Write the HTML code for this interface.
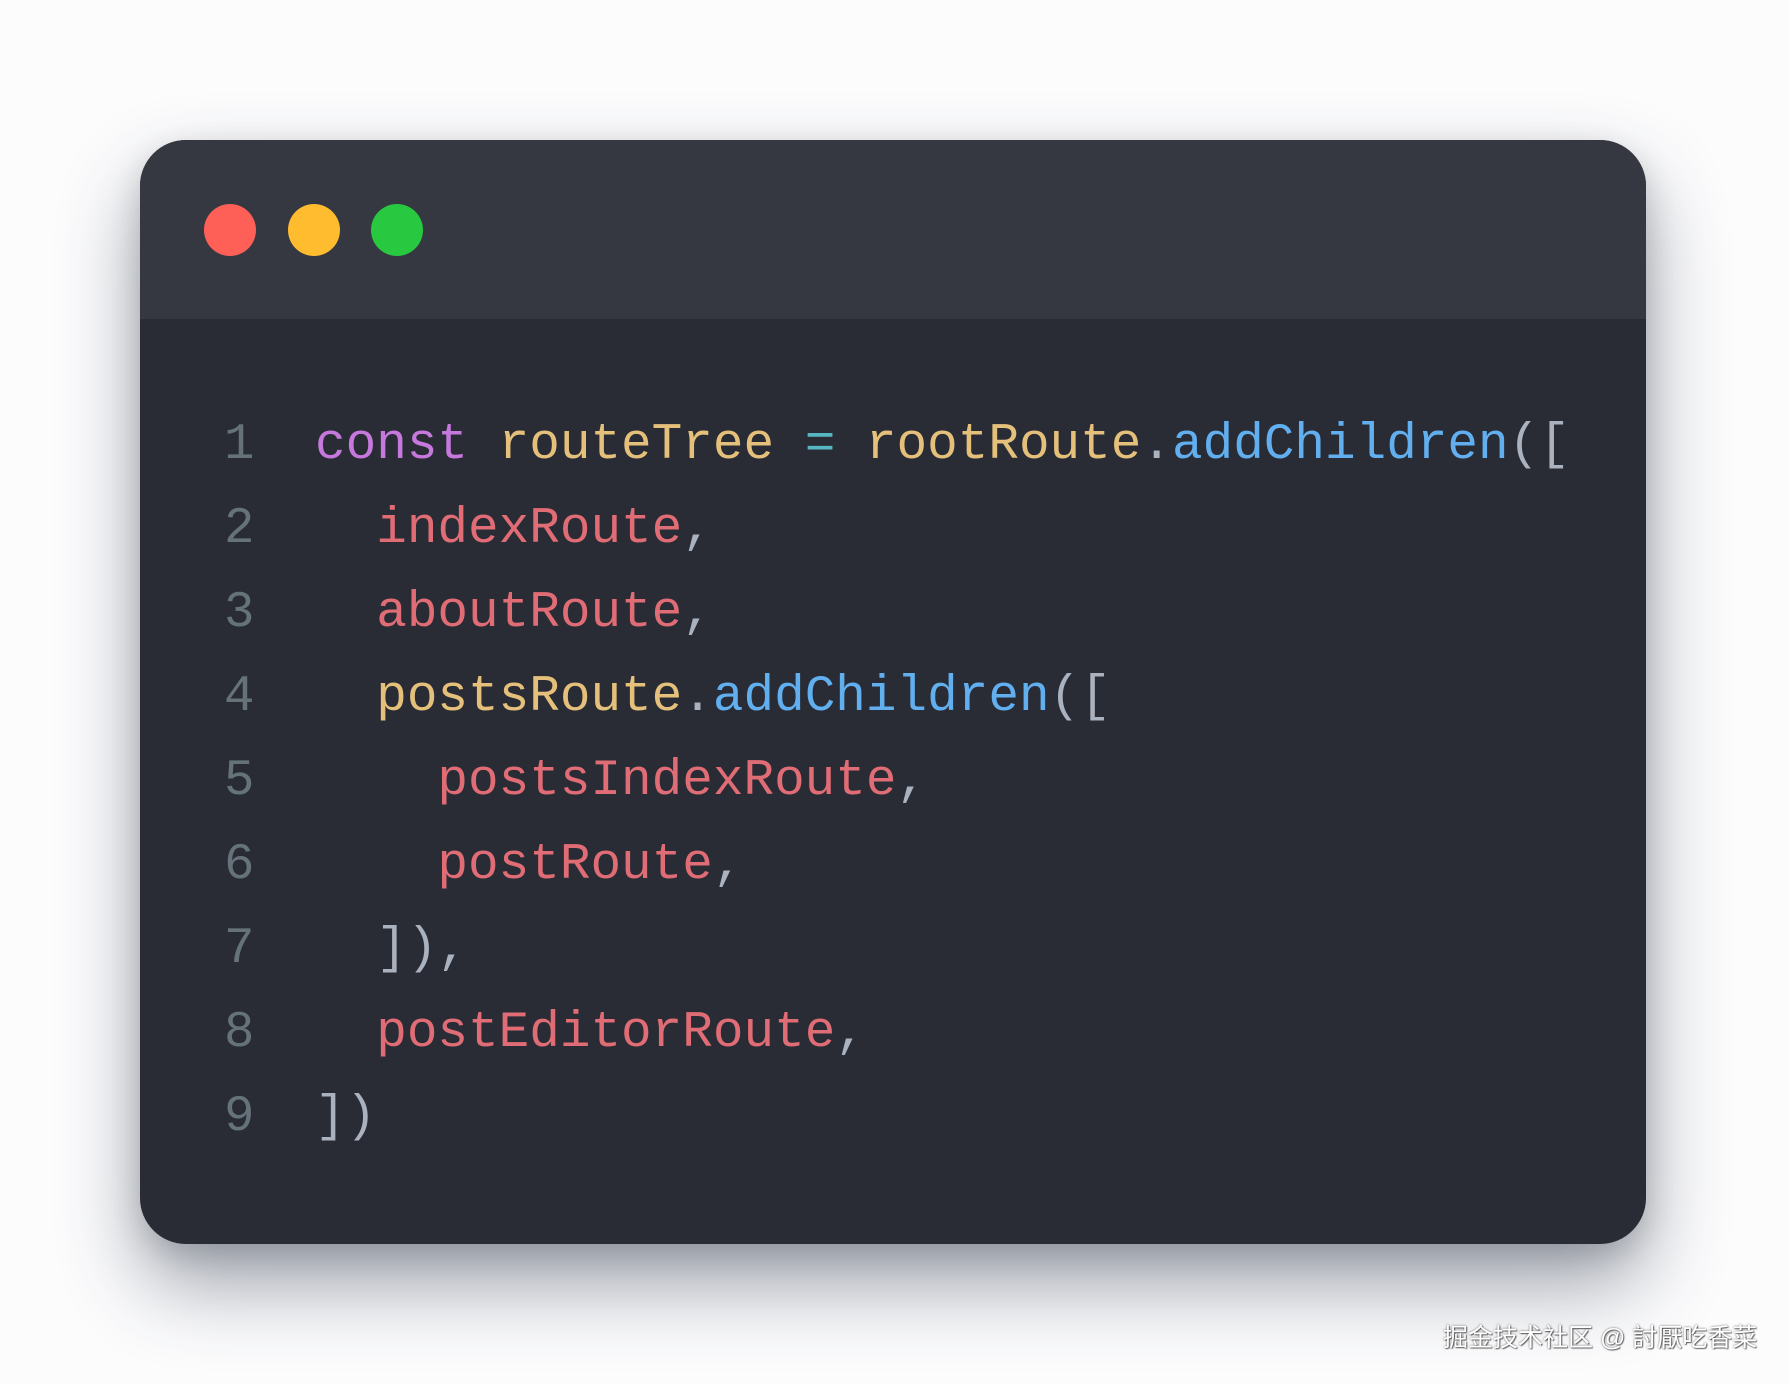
<!DOCTYPE html>
<html><head><meta charset="utf-8"><style>
html,body{margin:0;padding:0;width:1789px;height:1384px;background:#fcfcfd;overflow:hidden;position:relative}
.card{position:absolute;left:140px;top:140px;width:1506px;height:1104px;border-radius:46px;background:#292c35;box-shadow:0 40px 80px rgba(40,50,70,.45),0 10px 30px rgba(0,0,0,.15);overflow:hidden}
.bar{position:absolute;left:0;top:0;width:100%;height:179px;background:#353841}
.dot{position:absolute;top:204px;width:52px;height:52px;border-radius:50%}
.ln{position:absolute;left:224px;top:404px;color:#66727a;font-family:"Liberation Mono",monospace;font-size:50.7px;line-height:84px;margin:0}
.code{position:absolute;left:315px;top:404px;color:#abb2bf;font-family:"Liberation Mono",monospace;font-size:51px;line-height:84px;margin:0;white-space:pre}
.k{color:#c678dd}.y{color:#e5c07b}.r{color:#e06c75}.b{color:#61afef}.c{color:#56b6c2}
.wm{position:absolute;left:1443px;top:1318px;font-family:"Liberation Sans","Noto Sans CJK SC",sans-serif;font-size:25px;color:#fff;text-shadow:0 0 2px rgba(0,0,0,.6),1px 1px 1px rgba(0,0,0,.5)}
</style></head><body>
<div class="card"><div class="bar"></div></div>
<div class="dot" style="left:204px;background:#fe5f57"></div>
<div class="dot" style="left:288px;background:#febc2e"></div>
<div class="dot" style="left:371px;background:#28c840"></div>
<pre class="ln">1
2
3
4
5
6
7
8
9</pre>
<pre class="code"><span class="k">const</span> <span class="y">routeTree</span> <span class="c">=</span> <span class="y">rootRoute</span>.<span class="b">addChildren</span>([
  <span class="r">indexRoute</span>,
  <span class="r">aboutRoute</span>,
  <span class="y">postsRoute</span>.<span class="b">addChildren</span>([
    <span class="r">postsIndexRoute</span>,
    <span class="r">postRoute</span>,
  ]),
  <span class="r">postEditorRoute</span>,
])</pre>
<div class="wm">掘金技术社区 @ 討厭吃香菜</div>
</body></html>
